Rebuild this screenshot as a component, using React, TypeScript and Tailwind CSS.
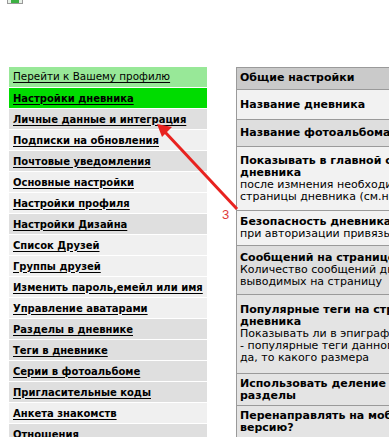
import React from "react";

type MenuItem = { label: string; bg: string; bold?: boolean };

const menu: MenuItem[] = [
  { label: "Перейти к Вашему профилю", bg: "bg-[#98e898]", bold: false },
  { label: "Настройки дневника", bg: "bg-[#00dc00]" },
  { label: "Личные данные и интеграция", bg: "bg-[#dfdfdf]" },
  { label: "Подписки на обновления", bg: "bg-[#f0f0f0]" },
  { label: "Почтовые уведомления", bg: "bg-[#dfdfdf]" },
  { label: "Основные настройки", bg: "bg-[#f0f0f0]" },
  { label: "Настройки профиля", bg: "bg-[#f0f0f0]" },
  { label: "Настройки Дизайна", bg: "bg-[#dfdfdf]" },
  { label: "Список Друзей", bg: "bg-[#f0f0f0]" },
  { label: "Группы друзей", bg: "bg-[#f0f0f0]" },
  { label: "Изменить пароль,емейл или имя", bg: "bg-[#f0f0f0]" },
  { label: "Управление аватарами", bg: "bg-[#f0f0f0]" },
  { label: "Разделы в дневнике", bg: "bg-[#dfdfdf]" },
  { label: "Теги в дневнике", bg: "bg-[#dfdfdf]" },
  { label: "Серии в фотоальбоме", bg: "bg-[#dfdfdf]" },
  { label: "Пригласительные коды", bg: "bg-[#dfdfdf]" },
  { label: "Анкета знакомств", bg: "bg-[#f0f0f0]" },
  { label: "Отношения", bg: "bg-[#dfdfdf]" },
];

interface Row {
  title: string[];
  desc?: string[];
  height: string;
  bg: string;
}

const rows: Row[] = [
  { title: ["Название дневника"], height: "h-[30px]", bg: "bg-[#f2f2f2]" },
  { title: ["Название фотоальбома"], height: "h-[27px]", bg: "bg-[#dedede]" },
  {
    title: ["Показывать в главной странице", "дневника"],
    desc: ["после измнения необходимо обновить", "страницы дневника (см.настройки)"],
    height: "h-[64px]",
    bg: "bg-[#f2f2f2]",
  },
  {
    title: ["Безопасность дневника"],
    desc: ["при авторизации привязывать сессию к IP"],
    height: "h-[35px]",
    bg: "bg-[#f2f2f2]",
  },
  {
    title: ["Сообщений на странице"],
    desc: ["Количество сообщений дневника,", "выводимых на страницу"],
    height: "h-[49px]",
    bg: "bg-[#dedede]",
  },
  {
    title: ["Популярные теги на странице", "дневника"],
    desc: ["Показывать ли в эпиграфе дневника", "- популярные теги данного дневника, и если", "да, то какого размера"],
    height: "h-[79px]",
    bg: "bg-[#e4e4e4]",
  },
  {
    title: ["Использовать деление на", "разделы"],
    height: "h-[32px]",
    bg: "bg-[#e4e4e4]",
  },
  {
    title: ["Перенаправлять на мобильную", "версию?"],
    height: "h-[32px]",
    bg: "bg-[#e4e4e4]",
  },
];

const App = () => {
  return (
    <div className="relative h-[437px] w-[389px] overflow-hidden bg-white font-['DejaVu_Sans',sans-serif] text-black">
      {/* cropped picture at the very top */}
      <div className="ml-[7px] flex h-[4px] w-[16px] border-x border-b border-[#9a9a9a] bg-[#e8f0e8] px-[3px]">
        <div className="h-[3px] w-[8px] bg-[#3cb043]" />
      </div>

      <div className="mt-[63px] flex items-start">
        <div className="ml-[9px] flex w-[198px] shrink-0 flex-col gap-px">
          {menu.map((item) => (
            <div
              key={item.label}
              className={`flex h-[20px] items-center pl-[4px] ${item.bg}`}
            >
              <span
                className={`whitespace-nowrap underline underline-offset-[2px] ${
                  item.bold === false
                    ? "text-[10.4px] font-normal"
                    : "text-[10px] font-bold"
                }`}
              >
                {item.label}
              </span>
            </div>
          ))}
        </div>

        <div className="ml-[29px] w-[320px] shrink-0 border-l border-t border-[#9a9a9a]">
          <div className="flex h-[22px] items-center border-b border-[#9a9a9a] bg-[#cacaca] pl-[3px] text-[11px] font-bold">
            Общие настройки
          </div>
          {rows.map((row) => (
            <div
              key={row.title[0]}
              className={`flex flex-col justify-center border-b border-[#9a9a9a] pl-[3px] ${row.height} ${row.bg}`}
            >
              {row.title.map((t) => (
                <div key={t} className="whitespace-nowrap text-[11px] font-bold leading-[12px]">
                  {t}
                </div>
              ))}
              {row.desc?.map((d) => (
                <div key={d} className="whitespace-nowrap text-[11px] leading-[12px]">
                  {d}
                </div>
              ))}
            </div>
          ))}
        </div>
      </div>

      {/* red annotation arrow */}
      <svg
        className="absolute left-0 top-0"
        width="389"
        height="437"
        viewBox="0 0 389 437"
      >
        <line x1="237" y1="209" x2="165" y2="132" stroke="#e8221f" strokeWidth="3" />
        <polygon points="157,124 172,127 162,137" fill="#e8221f" />
      </svg>
      <span className="absolute left-[222px] top-[208px] font-['Liberation_Sans',sans-serif] text-[13px] leading-[14px] text-[#e03a3a]">
        3
      </span>
    </div>
  );
};

export default App;
